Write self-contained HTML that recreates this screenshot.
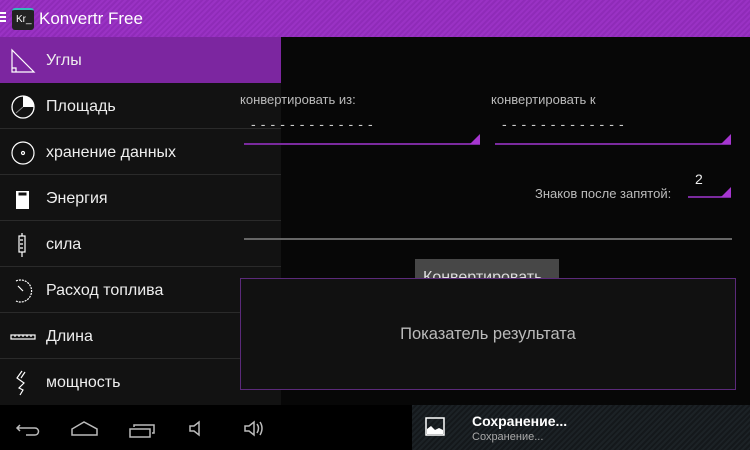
<!DOCTYPE html>
<html><head><meta charset="utf-8"><style>
*{margin:0;padding:0;box-sizing:border-box}
body{width:750px;height:450px;overflow:hidden;background:#070707;font-family:"Liberation Sans","Noto Sans CJK SC",sans-serif;position:relative;color:#ddd}
.abs{position:absolute}
#top{left:0;top:0;width:750px;height:37px;background:repeating-linear-gradient(135deg,#9a32c4 0 2px,#8f2bb8 2px 4px)}
#drawer{left:0;top:37px;width:281px;height:368px;background:#121212}
.row{position:absolute;left:0;width:281px;height:46px;border-bottom:1px solid #2a2a2a;font-size:16px;color:#eee}
.row span{position:absolute;left:46px;top:15px}
.row svg{position:absolute;left:10px;top:11px}
#nav{left:0;top:405px;width:750px;height:45px;background:#000}
#notif{left:412px;top:405px;width:338px;height:45px;background:repeating-linear-gradient(135deg,#1c2226 0 2px,#14181b 2px 4px)}
.lbl{font-size:13px;color:#bbb}
.line{height:2px;background:#7a2a9e}
</style></head><body>
<div id="top" class="abs">
 <div class="abs" style="left:0;top:12px;width:6px;height:2px;background:#fff;box-shadow:0 4px #fff,0 8px #fff"></div>
 <div class="abs" style="left:12px;top:8px;width:22px;height:22px;background:#222;border-radius:3px;border-top:2px solid #3bb;color:#fff;font-size:10px;padding:4px 0 0 4px">Kr_</div>
 <div class="abs" style="left:39px;top:9px;font-size:17px;color:#fff">Konvertr Free</div>
</div>
<div id="drawer" class="abs">
 <div class="row" style="top:0;background:#7c26a0;border:none"><svg width="26" height="26" viewBox="0 0 26 26" fill="none" stroke="#fff" stroke-width="1.2"><path d="M2 2V24H24Z M2 20H6V24"/></svg><span>Углы</span></div>
 <div class="row" style="top:46px"><svg width="26" height="26" viewBox="0 0 26 26"><circle cx="13" cy="13" r="11" fill="none" stroke="#fff" stroke-width="1.3"/><path d="M13 13V2A11 11 0 0 1 24 13Z" fill="#fff"/><path d="M13 13L6 19" stroke="#888"/></svg><span>Площадь</span></div>
 <div class="row" style="top:92px"><svg width="26" height="26" viewBox="0 0 26 26" fill="none" stroke="#fff" stroke-width="1.2"><circle cx="13" cy="13" r="11"/><circle cx="13" cy="13" r="1.5"/></svg><span>хранение данных</span></div>
 <div class="row" style="top:138px"><svg width="26" height="26" viewBox="0 0 26 26"><rect x="6" y="5" width="13" height="18" fill="#fff"/><rect x="8" y="6" width="9" height="4" fill="#121212" stroke="#fff" stroke-width="1"/></svg><span>Энергия</span></div>
 <div class="row" style="top:184px"><svg width="26" height="26" viewBox="0 0 26 26" fill="none" stroke="#fff" stroke-width="1.2"><rect x="9" y="4" width="6" height="16"/><path d="M12 1V4M12 20V25M10 8H13M10 12H13M10 16H13"/></svg><span>сила</span></div>
 <div class="row" style="top:230px"><svg width="26" height="26" viewBox="0 0 26 26" fill="none" stroke="#fff" stroke-width="1.2" stroke-dasharray="2 1"><path d="M6 3A11 11 0 1 1 6 23"/><path d="M13 13L8 8" stroke-dasharray="none"/></svg><span>Расход топлива</span></div>
 <div class="row" style="top:276px"><svg width="26" height="26" viewBox="0 0 26 26" fill="none" stroke="#fff" stroke-width="1.2"><rect x="1" y="11" width="24" height="4"/><path d="M5 11V13M9 11V13M13 11V13M17 11V13M21 11V13"/></svg><span>Длина</span></div>
 <div class="row" style="top:322px;border:none"><svg width="26" height="26" viewBox="0 0 26 26" fill="none" stroke="#fff" stroke-width="1.2"><path d="M12 1L7 8L14 13L9 18L13 20L10 25M15 2L11 8"/></svg><span>мощность</span></div>
</div>
<div class="abs lbl" style="left:240px;top:92px">конвертировать из:</div>
<div class="abs lbl" style="left:491px;top:92px">конвертировать к</div>
<div class="abs" style="left:251px;top:116px;font-size:14px;color:#ccc;letter-spacing:0.6px">- - - - - - - - - - - - -</div>
<div class="abs" style="left:502px;top:116px;font-size:14px;color:#ccc;letter-spacing:0.6px">- - - - - - - - - - - - -</div>
<div class="abs line" style="left:244px;top:143px;width:236px"></div>
<div class="abs" style="left:470px;top:134px;width:0;height:0;border-left:10px solid transparent;border-bottom:10px solid #a636d0"></div>
<div class="abs line" style="left:495px;top:143px;width:236px"></div>
<div class="abs" style="left:721px;top:134px;width:0;height:0;border-left:10px solid transparent;border-bottom:10px solid #a636d0"></div>
<div class="abs lbl" style="left:535px;top:186px">Знаков после запятой:</div>
<div class="abs" style="left:695px;top:171px;font-size:14px;color:#eee">2</div>
<div class="abs line" style="left:688px;top:196px;width:43px"></div>
<div class="abs" style="left:721px;top:187px;width:0;height:0;border-left:10px solid transparent;border-bottom:10px solid #a636d0"></div>
<div class="abs" style="left:244px;top:238px;width:488px;height:2px;background:#666"></div>
<div class="abs" style="left:415px;top:259px;width:144px;height:20px;background:#474747;overflow:hidden;font-size:16px;color:#ddd;padding:10px 0 0 8px">Конвертировать</div>
<div class="abs" style="left:240px;top:278px;width:496px;height:112px;background:#111;border:1px solid #5b2a7a;text-align:center;font-size:16.5px;color:#bbb;padding-top:46px">Показатель результата</div>
<div id="nav" class="abs">
 <svg class="abs" style="left:0;top:0" width="300" height="45" viewBox="0 0 300 45" fill="none" stroke="#bbb" stroke-width="1.5">
  <path d="M20 20L17 23L20 26M17 23H35A3 3 0 0 1 35 30H26"/><path d="M72 30H97V24L84 17L72 24Z"/><path d="M130 24H150V32H130Z M134 22V20H154V28H152"/>
  <path d="M190 21H194L199 17V30L194 26H190Z"/><path d="M245 21H249L254 17V30L249 26H245Z M257 19Q260 23 257 28 M260 17Q264 23 260 30"/>
 </svg>
</div>
<div id="notif" class="abs">
 <svg class="abs" style="left:13px;top:12px" width="20" height="19" viewBox="0 0 20 19"><rect x="1" y="1" width="18" height="17" fill="none" stroke="#fff" stroke-width="1.5"/><path d="M2 17V12L6 9L10 13L14 11L18 13V17Z" fill="#fff"/></svg>
 <div class="abs" style="left:60px;top:8px;font-size:14px;font-weight:bold;color:#fff">Сохранение...</div>
 <div class="abs" style="left:60px;top:26px;font-size:11px;color:#aaa">Сохранение...</div>
</div>
</body></html>
